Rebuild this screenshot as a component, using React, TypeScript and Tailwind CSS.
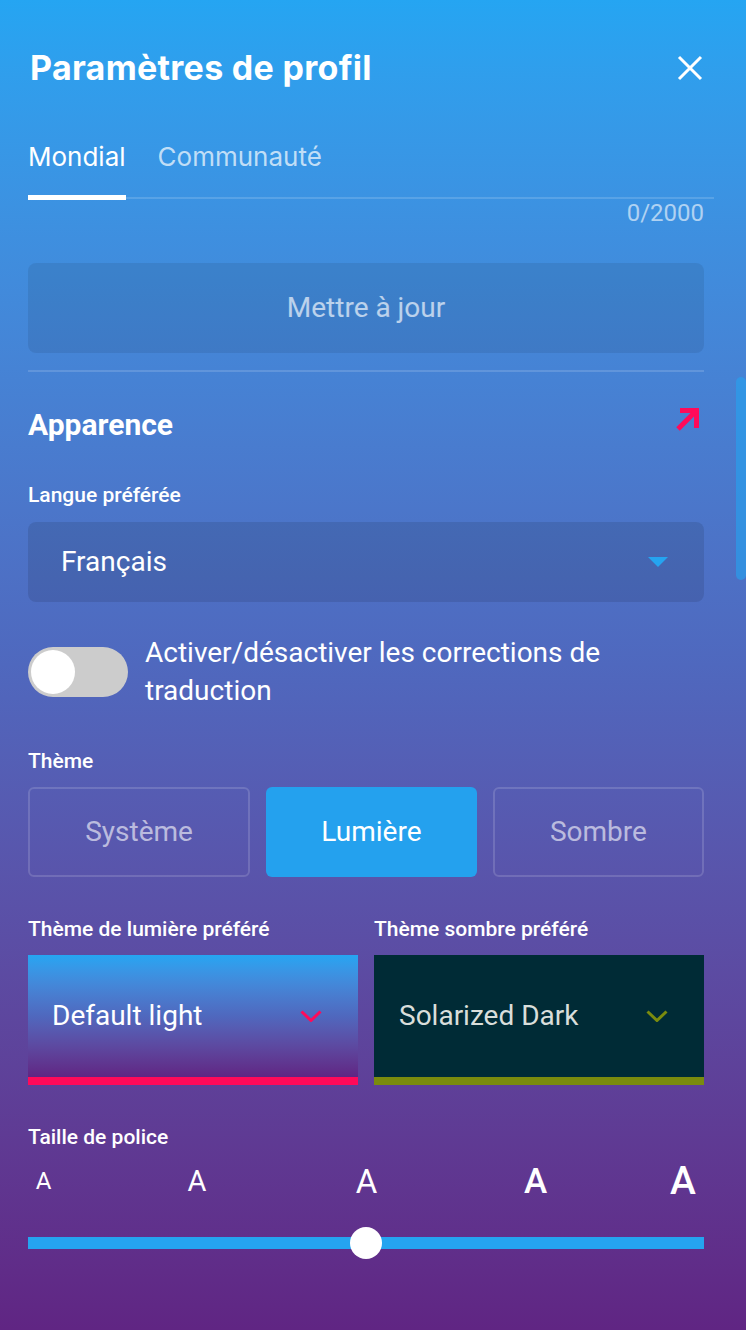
import React from "react";

const Chevron = ({ color }: { color: string }) => (
  <svg width="22" height="12" viewBox="0 0 22 12" fill="none">
    <path d="M1.5 1.5L11 10.5L20.5 1.5" stroke={color} strokeWidth="3" />
  </svg>
);

const App = (): JSX.Element => {
  return (
    <div className="relative w-[746px] h-[1330px] overflow-hidden bg-linear-to-b from-[#25a5f2] via-[#4f68be] to-[#602583] font-['Roboto',sans-serif] text-white">
      {/* scrollbar */}
      <div className="absolute right-0 top-[377px] h-[203px] w-[10px] rounded-full bg-[#25a4f0]/60"></div>

      <div className="pl-[28px] pr-[42px] pt-[48px]">
        {/* Header */}
        <header className="flex h-[40px] items-center justify-between pl-[2px]">
          <h1 className="font-['Inter',sans-serif] text-[34px] leading-[40px] font-bold tracking-[0.3px]">
            Paramètres de profil
          </h1>
          <button aria-label="Fermer" className="mr-[1px]">
            <svg width="26" height="26" viewBox="0 0 26 26" fill="none">
              <path d="M2 2L24 24M24 2L2 24" stroke="white" strokeWidth="3" />
            </svg>
          </button>
        </header>

        {/* Tabs */}
        <nav className="mt-[53px] flex items-start gap-8 font-['Inter',sans-serif] text-[26px] leading-[32px]">
          <div className="flex flex-col">
            <span className="text-white">Mondial</span>
            <span className="relative z-10 mt-[22px] h-[5px] w-full bg-white"></span>
          </div>
          <span className="text-white/70">Communauté</span>
        </nav>
        <div className="-mt-[3px] h-[2px] w-[686px] bg-white/15"></div>
        <div className="text-right text-[24px] leading-[28px] text-white/60">0/2000</div>

        {/* Update button */}
        <button className="mt-[36px] flex h-[90px] w-full items-center justify-center rounded-lg bg-black/[0.08] text-[28px] text-white/65">
          Mettre à jour
        </button>
        <div className="mt-[17px] h-[2px] w-full bg-white/15"></div>

        {/* Appearance */}
        <div className="mt-[35px] flex items-start justify-between">
          <h2 className="text-[30px] leading-[36px] font-bold">Apparence</h2>
          <svg className="mt-[1px] mr-[5px]" width="24" height="24" viewBox="0 0 24 24" fill="none">
            <path d="M5 2.5H21.5V20" stroke="#ff0a5a" strokeWidth="5" />
            <path d="M21 3L3 21" stroke="#ff0a5a" strokeWidth="5" />
          </svg>
        </div>

        <div className="mt-[40px] text-[21px] leading-[24px] font-medium">Langue préférée</div>
        <div className="mt-[15px] flex h-[80px] items-center justify-between rounded-lg bg-black/10 pl-[33px] pr-[36px]">
          <span className="text-[28px]">Français</span>
          <svg width="20" height="10" viewBox="0 0 20 10">
            <polygon points="0,0 20,0 10,10" fill="#25a4f0" />
          </svg>
        </div>

        {/* Toggle */}
        <div className="mt-[32px] flex items-center gap-[17px]">
          <div className="flex h-[50px] w-[100px] shrink-0 items-center rounded-full bg-[#cccccc] px-[3px]">
            <div className="h-[44px] w-[44px] rounded-full bg-white"></div>
          </div>
          <p className="text-[28px] leading-[38px]">Activer/désactiver les corrections de traduction</p>
        </div>

        {/* Theme */}
        <div className="mt-[39px] text-[21px] leading-[24px] font-medium">Thème</div>
        <div className="mt-[14px] flex h-[90px] gap-4 text-[28px]">
          <button className="flex-auto rounded-md border-2 border-white/15 text-white/60">Système</button>
          <button className="flex-auto rounded-md bg-[#24a1ee] text-white">Lumière</button>
          <button className="flex-auto rounded-md border-2 border-white/15 text-white/60">Sombre</button>
        </div>

        <div className="mt-[40px] grid grid-cols-2 gap-4">
          <div>
            <div className="text-[21px] leading-[24px] font-medium">Thème de lumière préféré</div>
            <div className="mt-[14px] border-b-8 border-[#ff0a5a] bg-linear-to-b from-[#25a5f2] via-[#4f68be] to-[#602583]">
              <div className="flex h-[122px] items-center justify-between pl-[24px] pr-[36px]">
                <span className="text-[28px] text-white">Default light</span>
                <Chevron color="#ff0a5a" />
              </div>
            </div>
          </div>
          <div>
            <div className="text-[21px] leading-[24px] font-medium">Thème sombre préféré</div>
            <div className="mt-[14px] border-b-8 border-[#7a8b0e] bg-[#002b36]">
              <div className="flex h-[122px] items-center justify-between pl-[25px] pr-[36px]">
                <span className="text-[28px] text-[#d9dedb]">Solarized Dark</span>
                <Chevron color="#7a8b0e" />
              </div>
            </div>
          </div>
        </div>

        {/* Font size */}
        <div className="mt-[40px] text-[21px] leading-[24px] font-medium">Taille de police</div>
        <div className="relative mt-[8px] h-[48px] leading-none">
          <span className="absolute left-[15.5px] top-1/2 -translate-x-1/2 -translate-y-1/2 text-[24px]">A</span>
          <span className="absolute left-[169px] top-1/2 -translate-x-1/2 -translate-y-1/2 text-[29px]">A</span>
          <span className="absolute left-[338.5px] top-1/2 -translate-x-1/2 -translate-y-1/2 text-[33px]">A</span>
          <span className="absolute left-[507.5px] top-1/2 -translate-x-1/2 -translate-y-1/2 text-[35px] font-medium">A</span>
          <span className="absolute left-[655px] top-1/2 -translate-x-1/2 -translate-y-1/2 text-[39px] font-medium">A</span>
        </div>
        <div className="relative mt-[32px] h-[12px] w-full bg-[#25a4f0]">
          <div className="absolute left-1/2 top-1/2 h-[32px] w-[32px] -translate-x-1/2 -translate-y-1/2 rounded-full bg-white"></div>
        </div>
      </div>
    </div>
  );
};

export default App;
